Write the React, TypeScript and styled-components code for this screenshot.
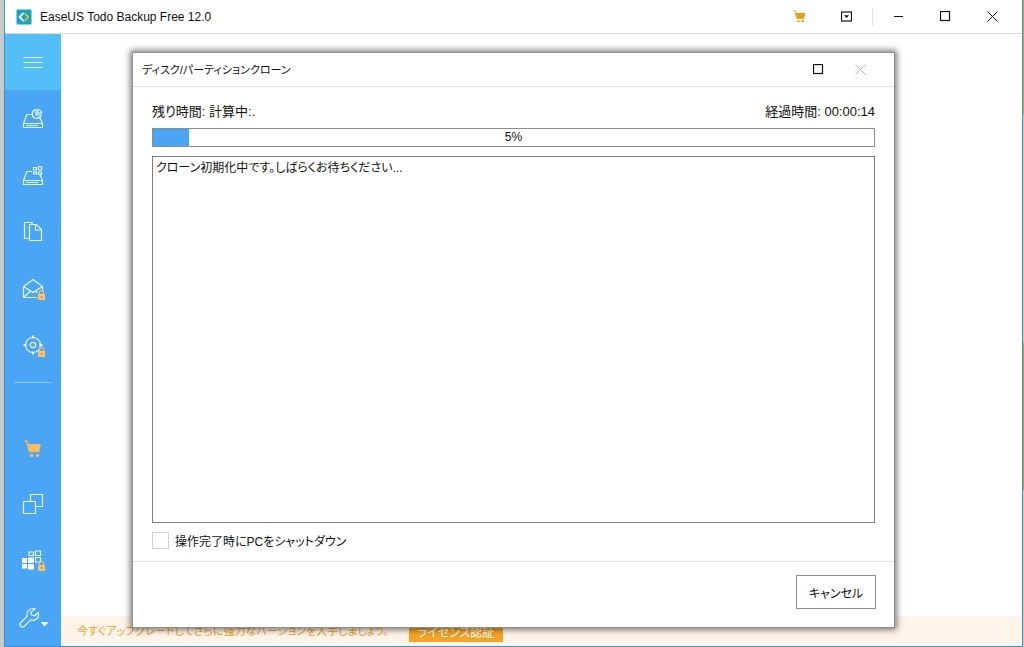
import React from "react";
import styled, { createGlobalStyle } from "styled-components";

const GlobalStyle = createGlobalStyle`
  * { box-sizing: border-box; }
  body { margin: 0; }
  body, button, input {
    font-family: "Liberation Sans", "Noto Sans CJK JP", sans-serif;
    font-size: 12px;
    font-feature-settings: "palt";
    color: #111;
  }
`;

const Desktop = styled.div`
  display: flex;
  min-height: 100vh;
  background: #c9cacc;
  padding-left: 4px;
`;

const Backdrop = styled.div`
  flex: none;
  width: 1px;
  background: linear-gradient(
    #a3b26a 0 115px,
    #b4cbe0 115px 343px,
    #9aaa55 343px 490px,
    #b4cbe0 490px
  );
`;

const Window = styled.div`
  flex: 1;
  display: flex;
  flex-direction: column;
  background: #fff;
  border: solid #3a8fd6;
  border-width: 0 1px 1px;
  border-right-color: #5b8ca6;
`;

const TitleBar = styled.header`
  display: flex;
  align-items: center;
  height: 34px;
  padding-left: 11px;
  padding-right: 6px;
  border-bottom: 1px solid #dcdcdc;
`;

const AppName = styled.h1`
  flex: 1;
  margin: 0 0 0 8px;
  font-size: 12px;
  line-height: 16px;
  font-weight: 400;
`;

const CaptionButton = styled.button<{ $width?: number; $muted?: boolean }>`
  display: flex;
  align-items: center;
  justify-content: center;
  width: ${(p) => p.$width ?? 47}px;
  height: 32px;
  padding: 0;
  border: 0;
  background: none;
  color: ${(p) => (p.$muted ? "#b4b4b4" : "#111")};
`;

const CaptionDivider = styled.span`
  width: 1px;
  height: 18px;
  margin: 0 2px;
  background: #e2e2e2;
`;

const Main = styled.div`
  flex: 1;
  display: flex;
`;

const Sidebar = styled.nav`
  display: flex;
  flex-direction: column;
  width: 56px;
  background: #4aa5f5;
`;

const NavButton = styled.button<{ $active?: boolean }>`
  display: flex;
  align-items: center;
  justify-content: center;
  width: 100%;
  height: ${(p) => (p.$active ? 56 : 57)}px;
  padding: 0;
  border: 0;
  color: #fff;
  background: ${(p) => (p.$active ? "#53bff6" : "transparent")};
`;

const NavDivider = styled.hr`
  width: 38px;
  height: 1px;
  margin: 7px auto auto;
  border: 0;
  background: #85c2f8;
`;

const Content = styled.main`
  position: relative;
  flex: 1;
  display: flex;
  flex-direction: column;
  justify-content: flex-end;
`;

const Banner = styled.div`
  display: flex;
  align-items: center;
  gap: 20px;
  height: 30px;
  padding-left: 15px;
  margin-left: 1px;
  color: #f0a22c;
  background: #fff4ea;
`;

const BannerText = styled.p`
  margin: 0;
  font-size: 11px;
  line-height: 20px;
`;

const LicenseButton = styled.button`
  width: 94px;
  height: 22px;
  padding: 0;
  border: 0;
  color: #fff;
  background: #f5a424;
`;

const Dialog = styled.section`
  position: absolute;
  inset: 18px 127px 18px 71px;
  display: flex;
  flex-direction: column;
  border: 1px solid #8e8e8e;
  background: #fff;
  box-shadow: 0 0 6px 2px rgba(0, 0, 0, 0.5);
`;

const DialogHeader = styled.header`
  display: flex;
  align-items: center;
  height: 34px;
  padding: 0 13px 0 9px;
  border-bottom: 1px solid #dfdfdf;
`;

const DialogTitle = styled.h2`
  flex: 1;
  margin: 0;
  font-size: 11px;
  line-height: 20px;
  font-weight: 400;
`;

const DialogBody = styled.div`
  flex: 1;
  display: flex;
  flex-direction: column;
  padding: 15px 19px 12px;
`;

const TimeRow = styled.div`
  display: flex;
  justify-content: space-between;
  font-size: 13px;
  line-height: 20px;
`;

const ProgressTrack = styled.div`
  position: relative;
  height: 19px;
  margin-top: 6px;
  border: 1px solid #8c8c8c;
`;

const ProgressFill = styled.div`
  height: 100%;
  background: #4aa5f5;
`;

const ProgressLabel = styled.span`
  position: absolute;
  inset: 0;
  line-height: 17px;
  text-align: center;
`;

const Log = styled.div`
  flex: 1;
  margin-top: 9px;
  padding: 1px 3px;
  line-height: 20px;
  border: 1px solid #7d7d7d;
`;

const ShutdownLabel = styled.label`
  display: flex;
  align-items: center;
  gap: 6px;
  height: 17px;
  margin-top: 9px;
`;

const Checkbox = styled.input`
  appearance: none;
  width: 17px;
  height: 17px;
  margin: 0;
  border: 1px solid #d2d2d2;
  background: #fff;
`;

const DialogFooter = styled.footer`
  display: flex;
  justify-content: flex-end;
  padding: 13px 18px 18px;
  border-top: 1px solid #dfdfdf;
`;

const CancelButton = styled.button`
  width: 80px;
  height: 34px;
  padding: 0;
  border: 1px solid #8c8c8c;
  background: #fff;
`;

const NavSvg = ({
  children,
  width = 28,
  height = 29,
}: {
  children: React.ReactNode;
  width?: number;
  height?: number;
}) => (
  <svg
    width={width}
    height={height}
    viewBox={`0 0 ${width} ${height}`}
    fill="none"
    stroke="#e4f7ff"
    strokeWidth="1.2"
    aria-hidden="true"
  >
    {children}
  </svg>
);

const Lock = () => (
  <g stroke="none">
    <path d="M20.500 19v-1.500a2 2 0 0 1 4 0V19" fill="none" stroke="#e5bb7a" strokeWidth="1.3" />
    <rect x="19" y="19" width="7" height="6" fill="#fcc069" />
    <rect x="22" y="21" width="1" height="2" fill="#a98450" />
  </g>
);

const Drive = () => <path d="M13 10.5H7.8L4.500 19.500v4h19v-4L21 13.500M4.500 19.500h19M7 21.500h12" />;

const MaximizeIcon = () => (
  <svg width="11" height="11" viewBox="0 0 11 11" aria-hidden="true">
    <rect x=".5" y=".5" width="9" height="9" fill="none" stroke="currentColor" strokeWidth="1.2" />
  </svg>
);

const CloseIcon = () => (
  <svg width="11" height="11" viewBox="0 0 11 11" aria-hidden="true">
    <path d="M.5.5l10 10M10.5.5l-10 10" stroke="currentColor" />
  </svg>
);

const CartShape = ({ color }: { color: string }) => (
  <g stroke="none">
    <path d="M.5 1h2.300l2.600 10.500h10" fill="none" stroke={color} strokeWidth="1.3" />
    <path d="M3.500 4h13.500l-1.800 7.500H5.500z" fill={color} />
    <ellipse cx="7.500" cy="15.500" rx="1.900" ry="1.400" fill={color} />
    <ellipse cx="13.500" cy="15.500" rx="1.900" ry="1.400" fill={color} />
  </g>
);

const Logo = () => (
  <svg width="16" height="16" viewBox="0 0 16 16" aria-hidden="true">
    <rect x=".5" y=".5" width="15" height="15" rx="1" fill="#12a3c6" />
    <path d="M7.500 2.800L2.300 8l5.200 5.200V10.600L5 8l2.500-2.600z" fill="#fff" />
    <path d="M8.500 2.800L13.700 8l-5.200 5.200V10.600L11 8 8.500 5.400z" fill="#e0b540" />
  </svg>
);

const navItems = [
  {
    label: "ディスクバックアップ",
    icon: (
      <>
        <Drive />
        <path d="M17 5.700a4.400 4.400 0 1 0 5 5.300h-5z" />
        <path d="M18.800 5.500v3.700h3.700a3.800 3.800 0 0 0-3.700-3.700z" />
      </>
    ),
  },
  {
    label: "システムバックアップ",
    icon: (
      <>
        <Drive />
        <path d="M14.500 6.500h3v2.500h-3zM19.500 5.500h3v3.500h-3zM14.500 11h3v2h-3zM19.500 11h3v2.500h-3z" />
      </>
    ),
  },
  {
    label: "ファイルバックアップ",
    icon: (
      <>
        <path d="M10.500 20.500h-5v-16h7.500v2" />
        <path d="M10.500 6.500h7l5 5v11h-12zM16.500 6.500v5.500H22.500" />
      </>
    ),
  },
  {
    label: "メールバックアップ",
    icon: (
      <>
        <path d="M18 22.500H4.500V11.500L14 4.500l9.500 7v4M4.500 11.500L14 17.500l9.500-6M4.500 22.500l7-6.500M16.500 16l2 2" />
        <Lock />
      </>
    ),
  },
  {
    label: "スマートバックアップ",
    icon: (
      <>
        <circle cx="14" cy="13" r="7.500" />
        <circle cx="14" cy="13" r="2.700" />
        <path d="M14 3.500v3M14 19.500v3M4.500 13h3M20.500 13h3" strokeWidth="2" />
        <Lock />
      </>
    ),
  },
];

export default function App() {
  const progress = 5;
  return (
    <>
      <GlobalStyle />
      <Desktop>
        <Window>
          <TitleBar>
            <Logo />
            <AppName>EaseUS Todo Backup Free 12.0</AppName>
            <CaptionButton aria-label="購入">
              <svg width="13" height="13" viewBox="0 0 18 18" aria-hidden="true">
                <CartShape color="#ef9a0c" />
              </svg>
            </CaptionButton>
            <CaptionButton aria-label="メニュー">
              <svg width="11" height="11" viewBox="0 0 11 11" aria-hidden="true">
                <rect x=".5" y="1" width="10" height="9" fill="none" stroke="#111" strokeWidth="1.200" />
                <path d="M3 4.300h5L5.500 7z" fill="#111" />
              </svg>
            </CaptionButton>
            <CaptionDivider />
            <CaptionButton aria-label="最小化">
              <svg width="11" height="11" viewBox="0 0 11 11" aria-hidden="true">
                <path d="M1 5.500h9" stroke="#111" />
              </svg>
            </CaptionButton>
            <CaptionButton aria-label="最大化">
              <MaximizeIcon />
            </CaptionButton>
            <CaptionButton aria-label="閉じる">
              <CloseIcon />
            </CaptionButton>
          </TitleBar>
          <Main>
            <Sidebar>
              <NavButton $active aria-label="メニューを開く">
                <NavSvg height={28}>
                  <path d="M4.500 9.500h19M4.500 14.500h19M4.500 19.500h19" />
                </NavSvg>
              </NavButton>
              {navItems.map((item) => (
                <NavButton key={item.label} aria-label={item.label}>
                  <NavSvg>{item.icon}</NavSvg>
                </NavButton>
              ))}
              <NavDivider />
              <NavButton aria-label="購入">
                <NavSvg>
                  <g transform="translate(5 8)">
                    <CartShape color="#f9bc62" />
                  </g>
                </NavSvg>
              </NavButton>
              <NavButton aria-label="クローン">
                <NavSvg>
                  <path d="M4.500 12.500h12v12h-12zM11.500 12.500v-7h12v12h-7" />
                </NavSvg>
              </NavButton>
              <NavButton aria-label="システムクローン">
                <NavSvg>
                  <path
                    d="M3 12h5v5H3zM9 11.500h6V17H9zM3 18h5v4.500H3zM9 18h6v5.500H9z"
                    fill="#fff"
                    stroke="none"
                  />
                  <path d="M10 6h4.500v3.500H10zM16.500 5h5v4.500h-5zM16.500 11.500h5v4.500h-5z" />
                  <Lock />
                </NavSvg>
              </NavButton>
              <NavButton aria-label="ツール">
                <NavSvg width={32}>
                  <path d="M18 6A5.800 5.800 0 0 0 10.300 13.200L3.800 19.500a2.500 2.500 0 0 0 3.600 3.600L13.800 16.900A5.800 5.800 0 0 0 21.200 9.500l-3.400 3.300-3.200-.8-.8-3.100z" />
                  <path d="M23.500 19h8L27.500 23.500z" fill="#fff" stroke="none" />
                </NavSvg>
              </NavButton>
            </Sidebar>
            <Content>
              <Banner>
                <BannerText>今すぐアップグレードしてさらに強力なバージョンを入手しましょう。</BannerText>
                <LicenseButton>ライセンス認証</LicenseButton>
              </Banner>
              <Dialog role="dialog" aria-labelledby="dialog-title">
                <DialogHeader>
                  <DialogTitle id="dialog-title">ディスク/パーティションクローン</DialogTitle>
                  <CaptionButton $width={42} aria-label="最大化">
                    <MaximizeIcon />
                  </CaptionButton>
                  <CaptionButton $width={42} $muted aria-label="閉じる">
                    <CloseIcon />
                  </CaptionButton>
                </DialogHeader>
                <DialogBody>
                  <TimeRow>
                    <span>残り時間: 計算中:.</span>
                    <span>経過時間: 00:00:14</span>
                  </TimeRow>
                  <ProgressTrack role="progressbar" aria-valuenow={progress} aria-valuemin={0} aria-valuemax={100}>
                    <ProgressFill style={{ width: `${progress}%` }} />
                    <ProgressLabel>{progress}%</ProgressLabel>
                  </ProgressTrack>
                  <Log>クローン初期化中です。しばらくお待ちください...</Log>
                  <ShutdownLabel>
                    <Checkbox type="checkbox" />
                    操作完了時にPCをシャットダウン
                  </ShutdownLabel>
                </DialogBody>
                <DialogFooter>
                  <CancelButton>キャンセル</CancelButton>
                </DialogFooter>
              </Dialog>
            </Content>
          </Main>
        </Window>
        <Backdrop />
      </Desktop>
    </>
  );
}
